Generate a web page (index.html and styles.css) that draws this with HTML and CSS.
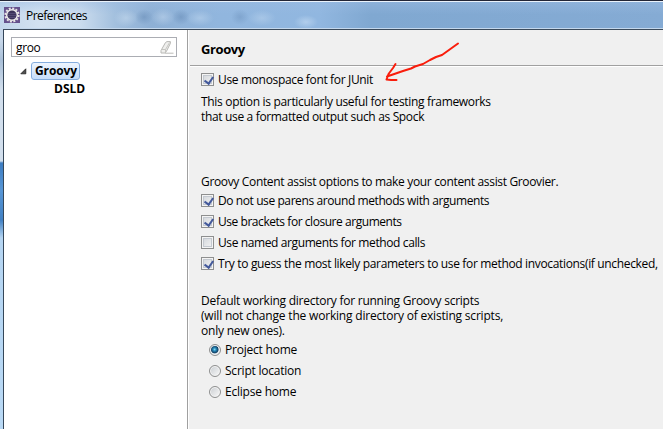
FILE: index.html
```html
<!DOCTYPE html>
<html lang="en">
<head>
<meta charset="utf-8">
<title>Preferences</title>
<link rel="stylesheet" href="styles.css">
</head>
<body>
<div class="window">
  <header class="titlebar">
    <svg class="app-icon" width="16" height="16" viewBox="0 0 16 16">
      <rect width="16" height="16" fill="#65518c"/>
      <circle cx="8" cy="8" r="6.6" fill="none" stroke="#e8e4e5" stroke-width="2" stroke-dasharray="2 1.455"/>
      <circle cx="8" cy="8" r="5.3" fill="#3b3158" stroke="#efedec" stroke-width="1.5"/>
      <path d="M4 6.4h8M3.5 8.4h9M4 10.4h8" stroke="#665b86" stroke-width=".7"/>
    </svg>
    <span class="title">Preferences</span>
  </header>
  <div class="frame">
    <aside class="sidebar">
      <div class="filter"><span>groo</span>
        <svg width="14" height="13" viewBox="0 0 14 13"><path d="M1 9.500 5.500 1.500 7 .6h3.400v1.800L6.300 10.600 5 12H1z" fill="#efefed" stroke="#b8b8b5"/><path d="M1.500 8.500h4L9.600 1.500M5.500 8.500V12" fill="none" stroke="#c6c6c2"/><path d="M5 12.200h8.500" stroke="#bcbcb8"/></svg>
      </div>
      <div class="tree-row">
        <svg width="7" height="7" viewBox="0 0 7 7"><path d="M5.800 .8v5H.8z" fill="#505050" stroke="#202020" stroke-width=".8"/></svg>
        <span class="selected">Groovy</span>
      </div>
      <div class="child">DSLD</div>
    </aside>
    <main class="page">
      <h1>Groovy</h1>
      <div class="options">
        <div class="row"><i class="check on"></i><span class="t1">Use monospace font for JUnit</span></div>
        <p class="note"><span class="t2">This option is particularly useful for testing frameworks</span><br><span class="t3">that use a formatted output such as Spock</span></p>
        <p class="intro"><span class="t4">Groovy Content assist options to make your content assist Groovier.</span></p>
        <div class="row"><i class="check on"></i><span class="t5">Do not use parens around methods with arguments</span></div>
        <div class="row"><i class="check on"></i><span class="t6">Use brackets for closure arguments</span></div>
        <div class="row"><i class="check"></i><span class="t7">Use named arguments for method calls</span></div>
        <div class="row"><i class="check on"></i><span class="t8">Try to guess the most likely parameters to use for method invocations(if unchecked,</span></div>
        <p class="directory"><span class="t9">Default working directory for running Groovy scripts</span><br><span class="t10">(will not change the working directory of existing scripts,</span><br><span class="t11">only new ones).</span></p>
        <div class="row radio-row"><i class="radio chosen"></i><span class="t12">Project home</span></div>
        <div class="row radio-row"><i class="radio"></i><span class="t13">Script location</span></div>
        <div class="row radio-row"><i class="radio"></i><span class="t14">Eclipse home</span></div>
      </div>
    </main>
  </div>
  <svg class="arrow" width="78" height="44" viewBox="0 0 78 44"><path d="M75 3.500 59 15 53 17 47 20 40 24 32 26.500 28 28.500 20 31 4 36.500M12.500 24 10 28 5.500 34 3.500 39.500 8 40H13.500" fill="none" stroke="#f91d0c" stroke-width="2" stroke-linecap="round" stroke-linejoin="round"/></svg>
</div>
</body>
</html>
```
FILE: styles.css
```css
* { box-sizing: border-box; }
body { margin: 0; overflow: hidden; font: 12px/15px "Open Sans", "Noto Sans", sans-serif; color: #000; }
.window { position: relative; width: 663px; height: 429px; display: flex; flex-direction: column; overflow: hidden;
  background: linear-gradient(#c8d8ea 0, #c8d8ea 40px, #a9bfd8 60px, #d2dfed 90px, #d2dfed 161px, #3d7dc2 163px, #5796d6 190px, #4181c4 220px, #b5d5f2 238px, #b9d9f5); }
.titlebar { height: 29px; flex: none; display: flex; align-items: center; gap: 6px; padding: 1px 0 0 4px;
  border-top: 1px solid #222536; border-bottom: 1px solid #c4d8ed; box-shadow: inset 0 1px #eaf2fb;
  background:
    radial-gradient(ellipse 12px 9px at 126px 17px, #bfd5ebb0, transparent),
    radial-gradient(ellipse 12px 9px at 163px 16px, #b7cfe9b0, transparent),
    radial-gradient(ellipse 14px 8px at 200px 17px, #b4cfebb0, transparent),
    radial-gradient(ellipse 14px 8px at 262px 17px, #b4cfeba0, transparent),
    radial-gradient(ellipse 12px 7px at 306px 21px, #bdd6f0c0, transparent),
    radial-gradient(ellipse 9px 8px at 144px 16px, #6388b480, transparent),
    radial-gradient(ellipse 9px 8px at 181px 16px, #6388b480, transparent),
    radial-gradient(ellipse 9px 8px at 240px 16px, #6388b460, transparent),
    linear-gradient(#9bbbe280, transparent 50%),
    linear-gradient(90deg, #c3d7eb 0, #d3e2f1 40px, #cbdcee 80px, #a3c0de 115px, #8eb0d5 150px, #91b6de 220px, #91b7e0 320px, #80a8d1 370px, #85abd4); }
.title { white-space: nowrap; letter-spacing: -.55px; }
.frame { flex: 1; display: flex; margin-left: 3px; border-left: 1px solid #354759; border-top: 1px solid #3c4b5b; }
.sidebar { width: 183px; flex: none; background: #fff; padding: 7px 10px 0 7px; }
.filter { height: 20px; border: 1px solid #abadb3; display: flex; align-items: center; justify-content: space-between; padding: 0 2px 0 4px; }
.filter span { letter-spacing: -.35px; }
.tree-row { display: flex; align-items: center; height: 18px; gap: 4px; margin: 5px 0 0 9px; }
.selected { width: 49px; height: 18px; line-height: 16px; padding-left: 3px; border: 1px solid #84acdd; border-radius: 3px; background: linear-gradient(#edf5fe, #c5ddfa); font-weight: 700; letter-spacing: -.1px; }
.child { font-weight: 700; margin: 0 0 0 43px; line-height: 17px; }
.page { flex: 1; min-width: 0; background: #f0f0f0; border-left: 1px solid #a0a0a0; box-shadow: inset 1px 0 #fff; }
h1 { height: 36px; margin: 0 0 0 2px; padding: 11px 0 0 11px; font: 700 13px/17px "Open Sans", sans-serif; letter-spacing: -.4px; border-bottom: 1px solid #a0a0a0; box-shadow: 0 1px #fff; }
.options { padding: 3px 0 0 13px; white-space: nowrap; }
.row { height: 21px; display: flex; align-items: center; gap: 4px; }
p { margin: 0; }
.note { margin-top: 4px; }
.intro { margin: 50px 0 1px; }
.directory { margin: 19px 0 1px; }
.t1 { letter-spacing: -.34px; }
.t2 { letter-spacing: -.32px; }
.t3 { letter-spacing: -.34px; }
.t4 { letter-spacing: -.34px; }
.t5 { letter-spacing: -.41px; }
.t6 { letter-spacing: -.45px; }
.t7 { letter-spacing: -.39px; }
.t8 { letter-spacing: -.34px; }
.t9 { letter-spacing: -.25px; }
.t10 { letter-spacing: -.19px; }
.t11 { letter-spacing: -.22px; }
.t12, .t13, .t14 { letter-spacing: -.22px; }
.check { width: 13px; height: 13px; flex: none; border: 1px solid #8e8f8f; background: linear-gradient(135deg, #cfd3d8, #f6f6f6); box-shadow: inset 0 0 0 1px #f4f4f4, inset 0 0 0 2px #c4c9d0; }
.check.on::after { content: ""; display: block; width: 4px; height: 7px; margin: 1px 0 0 4px; border: solid #43599b; border-width: 0 2px 2px 0; transform: rotate(35deg); }
.radio-row { padding-left: 8px; }
.radio { width: 12px; height: 12px; flex: none; border: 1px solid #8e8f8f; border-radius: 50%; background: linear-gradient(135deg, #c8ccd0, #fafafa); box-shadow: inset 0 0 0 1px #f4f4f4; }
.chosen { background: radial-gradient(circle at 46% 44%, #8de0f8 0, #278bbb 1.5px, #123f64 3.5px, #dfe7ec 4.4px); }
.arrow { position: absolute; left: 383px; top: 40px; }
```
